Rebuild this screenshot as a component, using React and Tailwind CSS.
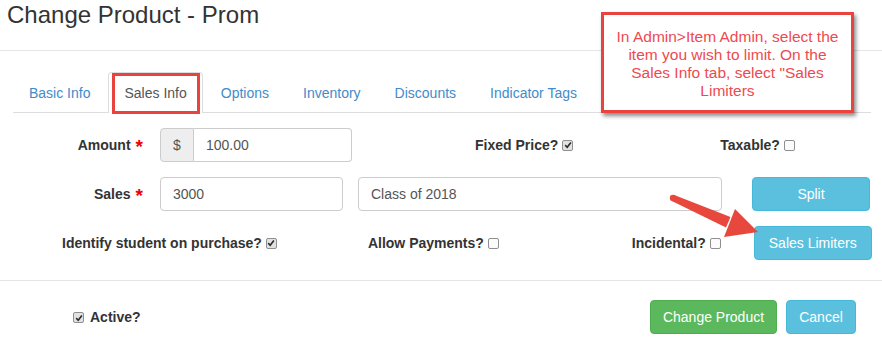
import React from 'react'

function Check({ on }) {
  return (
    <span className={`inline-flex h-[11px] w-[11px] items-center justify-center rounded-[2px] border border-[#8f8f8f] align-middle ${on ? 'bg-[#e2e2e2]' : 'bg-[#fbfbfb]'}`}>
      {on && (
        <svg viewBox="0 0 10 10" className="h-[8px] w-[8px]">
          <path d="M1.5 5.2 L4 7.8 L8.6 1.8" stroke="#2b2b2b" strokeWidth="2" fill="none" />
        </svg>
      )}
    </span>
  )
}

function CheckLabel({ text, on, className = '' }) {
  return (
    <span className={`inline-flex items-center gap-[4px] font-bold text-[#333] ${className}`}>
      {text}
      <Check on={on} />
    </span>
  )
}

function Star() {
  return <span className="relative top-[3px] ml-[5px] text-[19px] font-bold leading-none text-[#e00]">*</span>
}

const tabs = ['Basic Info', 'Sales Info', 'Options', 'Inventory', 'Discounts', 'Indicator Tags']

export default function App() {
  return (
    <div className="relative h-[349px] w-[882px] overflow-hidden bg-white font-['Liberation_Sans',Arial,sans-serif] text-[14px] text-[#333]">
      {/* header */}
      <div className="h-[51px] border-b border-[#e5e5e5] pl-[7px] pt-[2px]">
        <h3 className="text-[24px] leading-[26px] text-[#333]">Change Product - Prom</h3>
      </div>

      {/* tabs */}
      <div className="ml-[13px] mr-[11px] mt-[21px] flex h-[41px] border-b border-[#ddd]">
        {tabs.map((t) => {
          const active = t === 'Sales Info'
          return (
            <div
              key={t}
              className={
                active
                  ? 'relative mr-[2px] h-[41px] rounded-t-[4px] border border-b-0 border-[#ddd] bg-white px-[15px] pt-[10px] text-[#555]'
                  : 'mr-[2px] h-[40px] border border-transparent px-[15px] pt-[10px] text-[#428bca]'
              }
            >
              {t}
              {active && <span className="absolute left-[3px] right-[2px] top-[0px] h-[41px] border-[3px] border-[#e8433f]" />}
            </div>
          )
        })}
      </div>

      {/* row 1 */}
      <div className="mt-[15px] flex h-[34px] items-center">
        <div className="w-[143px] text-right font-bold">
          Amount<Star />
        </div>
        <div className="ml-[17px] flex h-[34px] w-[192px]">
          <span className="flex w-[34px] items-center justify-center rounded-l-[4px] border border-[#ccc] bg-[#eee] text-[#555]">$</span>
          <span className="flex flex-1 items-center rounded-r-[4px] border border-l-0 border-[#ccc] pl-[12px] text-[#555]">100.00</span>
        </div>
        <CheckLabel text="Fixed Price?" on className="ml-[123px]" />
        <CheckLabel text="Taxable?" className="ml-[147px]" />
      </div>

      {/* row 2 */}
      <div className="mt-[15px] flex h-[34px] items-center">
        <div className="w-[143px] text-right font-bold">
          Sales<Star />
        </div>
        <div className="ml-[17px] flex h-[34px] w-[183px] items-center rounded-[4px] border border-[#ccc] pl-[12px] text-[#555]">3000</div>
        <div className="ml-[15px] flex h-[34px] w-[364px] items-center rounded-[4px] border border-[#ccc] pl-[12px] text-[#555]">Class of 2018</div>
        <button className="ml-[30px] flex h-[34px] w-[118px] items-center justify-center rounded-[4px] border border-[#46b8da] bg-[#5bc0de] text-white">Split</button>
      </div>

      {/* row 3 */}
      <div className="mt-[15px] flex h-[34px] items-center">
        <CheckLabel text="Identify student on purchase?" on className="ml-[62px]" />
        <CheckLabel text="Allow Payments?" className="ml-[91px]" />
        <CheckLabel text="Incidental?" className="ml-[133px]" />
        <button className="ml-[33px] flex h-[34px] w-[118px] items-center justify-center rounded-[4px] border border-[#46b8da] bg-[#5bc0de] text-white">Sales Limiters</button>
      </div>

      {/* footer */}
      <div className="mt-[20px] flex h-[54px] items-start border-t border-[#e5e5e5] pt-[19px]">
        <span className="ml-[73px] mt-[7px] inline-flex items-center gap-[6px] font-bold">
          <Check on />
          Active?
        </span>
        <div className="ml-auto mr-[26px] flex gap-[9px]">
          <button className="flex h-[34px] w-[127px] items-center justify-center rounded-[4px] border border-[#4cae4c] bg-[#5cb85c] text-white">Change Product</button>
          <button className="flex h-[34px] w-[70px] items-center justify-center rounded-[4px] border border-[#46b8da] bg-[#5bc0de] text-white">Cancel</button>
        </div>
      </div>

      {/* callout overlay */}
      <div className="absolute left-[601px] top-[12px] flex h-[101px] w-[253px] items-start justify-center border-[3px] border-[#e8433f] bg-white pt-[13px] text-center text-[15.5px] leading-[18px] text-[#ee4a4f] shadow-[2px_3px_4px_rgba(0,0,0,0.45)]">
        <p>
          In Admin&gt;Item Admin, select the
          <br />
          item you wish to limit. On the
          <br />
          Sales Info tab, select "Sales
          <br />
          Limiters
        </p>
      </div>

      {/* arrow overlay */}
      <svg className="absolute left-[660px] top-[185px]" width="110" height="65" viewBox="0 0 110 65">
        <polygon points="14.2,10 11.8,16 66,42.5 70.5,32" fill="#e8473e" />
        <circle cx="13" cy="13" r="3.2" fill="#e8473e" />
        <polygon points="75,24 64,52 98,47" fill="#e8473e" />
      </svg>
    </div>
  )
}
